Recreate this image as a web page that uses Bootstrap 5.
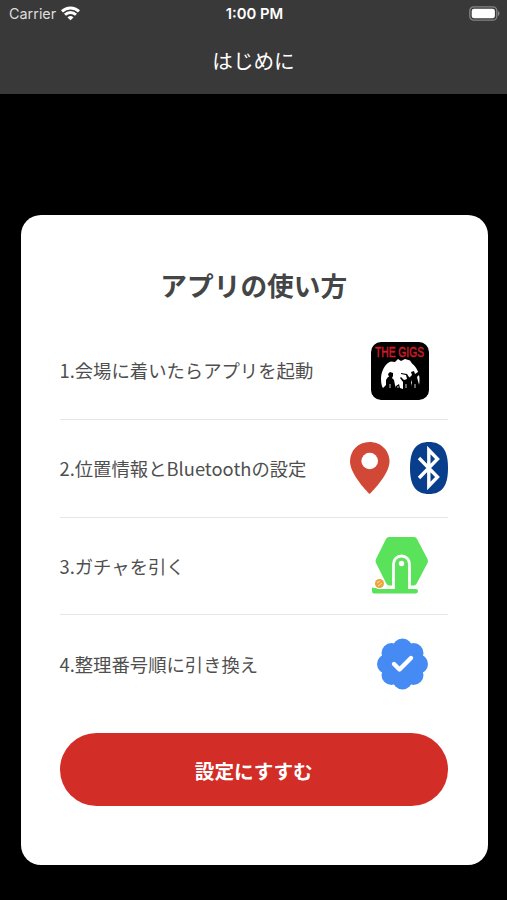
<!DOCTYPE html>
<html lang="ja">
<head>
<meta charset="utf-8">
<meta name="viewport" content="width=device-width, initial-scale=1">
<title>はじめに</title>
<link href="https://cdn.jsdelivr.net/npm/bootstrap@5.3.0/dist/css/bootstrap.min.css" rel="stylesheet">
<style>
body{font-family:"Noto Sans CJK JP",sans-serif;background:#000;height:900px;overflow:hidden}
svg{display:block;flex:none;overflow:visible}
.topbar{background:#393939;height:94px}
.status{height:27px;font-family:Inter,sans-serif;font-size:14.4px;padding:0 7px 0 9px;line-height:27px}
.carrier{color:#ddd}
.clock{font-size:14.8px;padding-top:1px}
.screen-title{font-size:20.6px;line-height:30px;margin-top:18px}
.guide{margin:120.5px 19.5px 0 20.5px;height:650px;border-radius:20px;padding:51px 39.5px 0 39px;color:#4a4a4a}
.guide-title{font-size:26.7px;line-height:38px;font-weight:700;color:#434546;margin:0 0 18.8px}
.step{height:97.7px;font-size:18.35px;padding:0;border:0;border-bottom:1.5px solid #e6e6e6;background:none;color:#4f4f4f}
.step:last-child{border-color:transparent}
.step>span{padding-top:1px}
.icons{width:98px}
.icons-single{padding-left:2px}
.go{height:73px;margin-top:19.7px;background:#d32d27;font-size:19.6px;font-weight:700;color:#fff;padding-top:8px}
.go:hover{background:#bd2520;color:#fff}
</style>
</head>
<body>
<header class="topbar text-white">
  <div class="status d-flex justify-content-between align-items-center">
    <div class="d-flex align-items-center col-4">
      <span class="carrier">Carrier</span>
      <svg class="ms-1" width="21" height="15" viewBox="0 0 21 15" fill="none" stroke="#fff" stroke-width="2.900"><path d="M2 5.400a12.200 12.200 0 0 1 17 0M5 8.700a7.900 7.900 0 0 1 11 0"/><path d="M10.500 14.300 7.500 11.400a4.300 4.300 0 0 1 6 0z" fill="#fff" stroke="none"/></svg>
    </div>
    <span class="clock fw-semibold">1:00 PM</span>
    <div class="col-4 d-flex justify-content-end">
      <svg width="31" height="15" viewBox="0 0 31 15"><rect x=".8" y=".8" width="27" height="13.400" rx="4" fill="none" stroke="#858585" stroke-width="1.300"/><rect x="2.700" y="2.700" width="23.200" height="9.600" rx="2.400" fill="#fff"/><path d="M29 5v5c2-.8 2-4.200 0-5" fill="#858585"/></svg>
    </div>
  </div>
  <h1 class="screen-title text-center fw-normal mb-0">はじめに</h1>
</header>
<main class="guide bg-white">
  <h2 class="guide-title text-center">アプリの使い方</h2>
  <ul class="list-group list-group-flush">
    <li class="list-group-item step d-flex align-items-center justify-content-between">
      <span>1.会場に着いたらアプリを起動</span>
      <div class="icons icons-single d-flex justify-content-center">
        <svg width="58" height="58" viewBox="0 0 58 58">
          <rect width="58" height="58" rx="10"/>
          <path d="M10 37C10 28 15 21 20 19.500l4 .5 3-3 3 2 4-2 5 1.500 2 3c4 3 7.500 9 7.500 15.500 0 6-1 9-3 12H14c-3-3-4-7-4-12z" fill="#fff"/>
          <g>
            <path d="M10 52l2-6 3-3v-5l2-3 1 0-1-3 2-2 3 1v3l-1 2 2 2 1 5 1 3 1 3v3z"/>
            <path d="M24 52l1-8 3-2 1 4 3 1V40l-3-4 1-1 3 3 3-1-1-4-5-1v-1l6 1 2 3 3 1-1 5 1 5 1 7z"/>
            <path d="M39 52l1-7 1-5-2-5 2-2-1-3 3-1 1 3 3-2 1-3h1l-1 6-2 2 1 4 2 7 1 6z"/>
          </g>
          <path d="M19 42v4M35 42v4M44 42v4M27 44v2" stroke="#fff" stroke-width=".8"/>
          <text x="4" y="15" textLength="49" lengthAdjust="spacingAndGlyphs" font-family="Liberation Sans,sans-serif" font-size="14" fill="#d01a28" stroke="#d01a28" stroke-width=".5">THE GIGS</text>
        </svg>
      </div>
    </li>
    <li class="list-group-item step d-flex align-items-center justify-content-between">
      <span>2.位置情報とBluetoothの設定</span>
      <div class="icons d-flex justify-content-between">
        <svg width="40" height="52" viewBox="0 0 40 52"><path d="M19.500 0C8 0 0 8.700 0 19.500 0 33 19.500 52 19.500 52S39.500 33 39.500 19.500C39.500 8.700 31 0 19.500 0z" fill="#d14836"/><circle cx="19.700" cy="19" r="8.300" fill="#fff"/></svg>
        <svg width="38" height="52" viewBox="0 0 38 52"><path d="M19 0c13 0 19 8 19 26s-6 26-19 26S0 44 0 26 6 0 19 0z" fill="#083e8c"/><path d="M9 16 27.500 35 18.800 44V8L27.500 17 9 36" fill="none" stroke="#fff" stroke-width="3.400"/></svg>
      </div>
    </li>
    <li class="list-group-item step d-flex align-items-center justify-content-between">
      <span>3.ガチャを引く</span>
      <div class="icons icons-single d-flex justify-content-center">
        <svg width="58" height="58" viewBox="0 0 58 58">
          <path d="M18 0h25q2 0 3 2l10.500 20q1 2 0 4L46 46q-1 2-3 2.500H18q-2-.5-3-2.500L5 26q-1-2 0-4L15 2q1-2 3-2z" fill="#5ae25a"/>
          <path d="M22.500 52V27a8 8 0 0 1 16 0v25" fill="#5ae25a" stroke="#fff" stroke-width="2.800"/>
          <path d="M1 50.500l9 1.500h35q2 0 2 2t-2 2.500H3Q1 56.500 1 54z" fill="#5ae25a"/>
          <circle cx="30.500" cy="26.500" r="2.700" fill="#fff"/>
          <circle cx="8.500" cy="46.500" r="5.500" fill="#fff"/><circle cx="8.500" cy="46.500" r="4.500" fill="#eba53e"/><path d="M6 46l3-2m-2 5 4-3" stroke="#ffe0a0"/>
        </svg>
      </div>
    </li>
    <li class="list-group-item step d-flex align-items-center justify-content-between">
      <span>4.整理番号順に引き換え</span>
      <div class="icons d-flex justify-content-center ps-2">
        <svg width="52" height="52" viewBox="-25.500 -26 52 52"><g fill="#468bf3"><circle r="22"/><circle cy="-15.500" r="10"/><circle cx="11" cy="-11" r="10"/><circle cx="15.500" r="10"/><circle cx="11" cy="11" r="10"/><circle cy="15.500" r="10"/><circle cx="-11" cy="11" r="10"/><circle cx="-15.500" r="10"/><circle cx="-11" cy="-11" r="10"/></g><path d="M-8.500 0-3 5.500 8.500-6" fill="none" stroke="#fff" stroke-width="4.400" stroke-linecap="round" stroke-linejoin="round"/></svg>
      </div>
    </li>
  </ul>
  <button class="btn go rounded-pill w-100 border-0" type="button">設定にすすむ</button>
</main>
<script src="https://cdn.jsdelivr.net/npm/bootstrap@5.3.0/dist/js/bootstrap.bundle.min.js"></script>
</body>
</html>
